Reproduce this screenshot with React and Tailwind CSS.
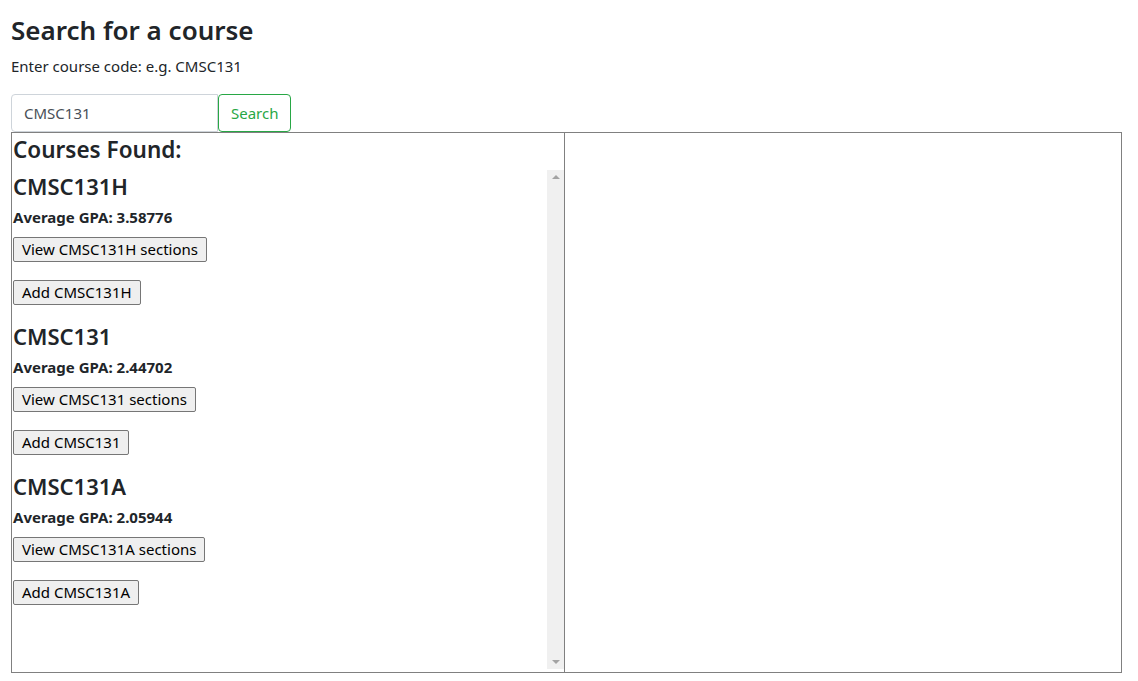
import React from 'react';

const COURSES = [
  { code: 'CMSC131H', gpa: '3.58776' },
  { code: 'CMSC131', gpa: '2.44702' },
  { code: 'CMSC131A', gpa: '2.05944' },
];

const font = { fontFamily: '"Noto Sans", "Open Sans", sans-serif' };

export default function App() {
  return (
    <div className="min-h-screen bg-white text-[#212529] px-[11px] pt-[13px]" style={font}>
      <h1 className="text-[26px] leading-[34px] font-semibold mb-[8px]">Search for a course</h1>
      <p className="text-[15px] leading-[22px] mb-[17px]">Enter course code: e.g. CMSC131</p>

      <div className="flex">
        <input
          defaultValue="CMSC131"
          className="w-[207px] h-[38px] px-[12px] text-[15px] text-[#495057] border border-[#ced4da] rounded-l-[4px] outline-none"
        />
        <button className="h-[38px] px-[12px] text-[15px] text-[#28a745] border border-[#28a745] rounded-[4px]">
          Search
        </button>
      </div>

      <div className="flex w-[1111px] h-[541px] border border-[#808080]">
        <div className="w-[553px] flex flex-col border-r border-[#808080]">
          <h4 className="text-[22.5px] leading-[29px] font-semibold pl-[1px] pt-[2px] mb-[6px]">Courses Found:</h4>
          <div className="flex flex-1 min-h-0 mb-[3px]">
            <div className="flex-1 pt-[4px] pl-[1px]">
              {COURSES.map((c) => (
                <CourseItem key={c.code} code={c.code} gpa={c.gpa} />
              ))}
            </div>
            <Scrollbar />
          </div>
        </div>
        <div className="flex-1"></div>
      </div>
    </div>
  );
}

function CourseItem({ code, gpa }) {
  return (
    <div className="flex flex-col items-start mb-[19px]">
      <h4 className="text-[22px] leading-[24px] font-semibold mb-[8px]">{code}</h4>
      <div className="text-[15px] leading-[22px] font-bold mb-[9px]">Average GPA: {gpa}</div>
      <button className="h-[25px] px-[8px] text-[15px] leading-[23px] bg-[#efefef] border border-[#767676] rounded-[2px] text-black mb-[18px]">
        View {code} sections
      </button>
      <button className="h-[25px] px-[8px] text-[15px] leading-[23px] bg-[#efefef] border border-[#767676] rounded-[2px] text-black">
        Add {code}
      </button>
    </div>
  );
}

function Scrollbar() {
  return (
    <div className="w-[17px] bg-[#f0f0f0] flex flex-col justify-between items-center py-[5px]">
      <div className="w-0 h-0 border-l-[4px] border-r-[4px] border-b-[4px] border-l-transparent border-r-transparent border-b-[#a3a3a3]"></div>
      <div className="w-0 h-0 border-l-[4px] border-r-[4px] border-t-[4px] border-l-transparent border-r-transparent border-t-[#a3a3a3]"></div>
    </div>
  );
}
